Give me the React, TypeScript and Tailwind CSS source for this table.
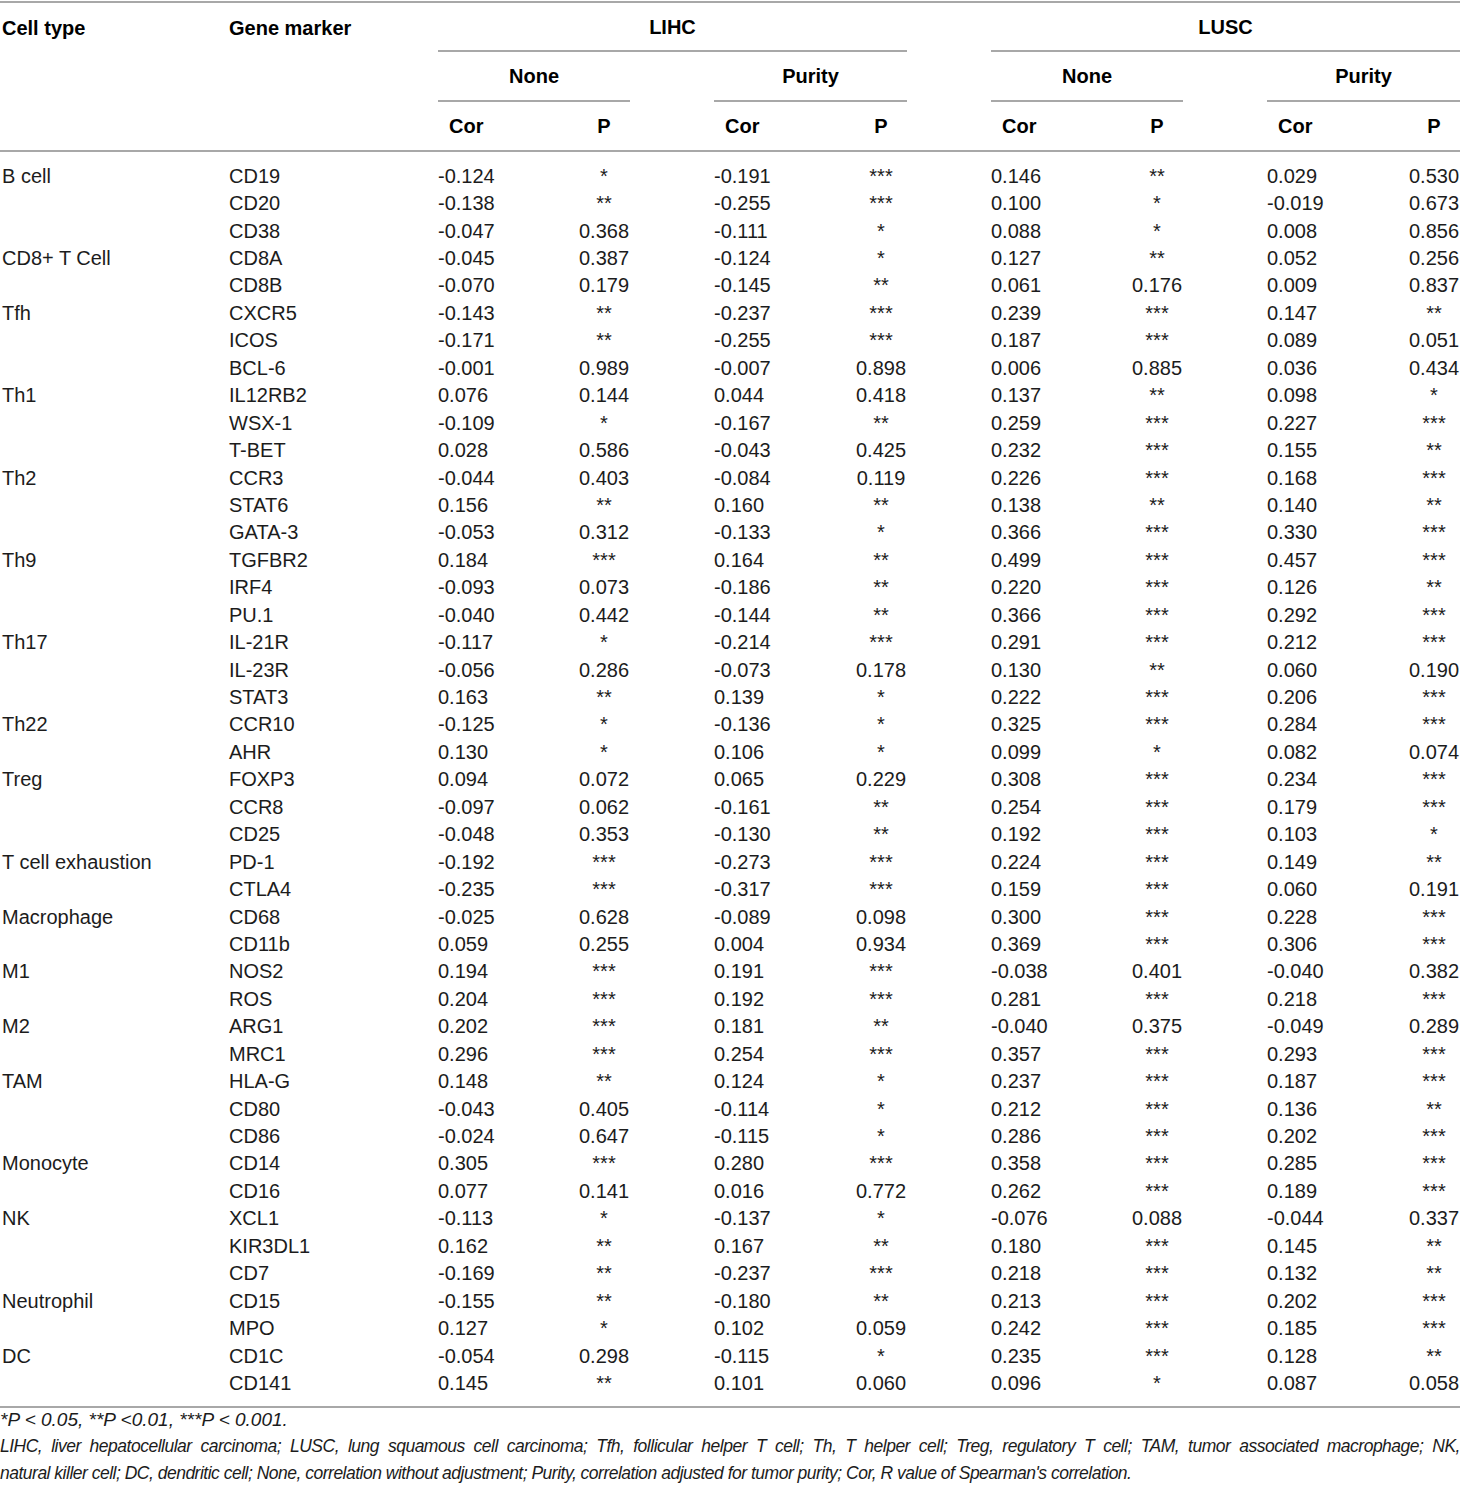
const rows: [string, string, string, string, string, string, string, string, string, string][] = [
  ["B cell", "CD19", "-0.124", "*", "-0.191", "***", "0.146", "**", "0.029", "0.530"],
  ["", "CD20", "-0.138", "**", "-0.255", "***", "0.100", "*", "-0.019", "0.673"],
  ["", "CD38", "-0.047", "0.368", "-0.111", "*", "0.088", "*", "0.008", "0.856"],
  ["CD8+ T Cell", "CD8A", "-0.045", "0.387", "-0.124", "*", "0.127", "**", "0.052", "0.256"],
  ["", "CD8B", "-0.070", "0.179", "-0.145", "**", "0.061", "0.176", "0.009", "0.837"],
  ["Tfh", "CXCR5", "-0.143", "**", "-0.237", "***", "0.239", "***", "0.147", "**"],
  ["", "ICOS", "-0.171", "**", "-0.255", "***", "0.187", "***", "0.089", "0.051"],
  ["", "BCL-6", "-0.001", "0.989", "-0.007", "0.898", "0.006", "0.885", "0.036", "0.434"],
  ["Th1", "IL12RB2", "0.076", "0.144", "0.044", "0.418", "0.137", "**", "0.098", "*"],
  ["", "WSX-1", "-0.109", "*", "-0.167", "**", "0.259", "***", "0.227", "***"],
  ["", "T-BET", "0.028", "0.586", "-0.043", "0.425", "0.232", "***", "0.155", "**"],
  ["Th2", "CCR3", "-0.044", "0.403", "-0.084", "0.119", "0.226", "***", "0.168", "***"],
  ["", "STAT6", "0.156", "**", "0.160", "**", "0.138", "**", "0.140", "**"],
  ["", "GATA-3", "-0.053", "0.312", "-0.133", "*", "0.366", "***", "0.330", "***"],
  ["Th9", "TGFBR2", "0.184", "***", "0.164", "**", "0.499", "***", "0.457", "***"],
  ["", "IRF4", "-0.093", "0.073", "-0.186", "**", "0.220", "***", "0.126", "**"],
  ["", "PU.1", "-0.040", "0.442", "-0.144", "**", "0.366", "***", "0.292", "***"],
  ["Th17", "IL-21R", "-0.117", "*", "-0.214", "***", "0.291", "***", "0.212", "***"],
  ["", "IL-23R", "-0.056", "0.286", "-0.073", "0.178", "0.130", "**", "0.060", "0.190"],
  ["", "STAT3", "0.163", "**", "0.139", "*", "0.222", "***", "0.206", "***"],
  ["Th22", "CCR10", "-0.125", "*", "-0.136", "*", "0.325", "***", "0.284", "***"],
  ["", "AHR", "0.130", "*", "0.106", "*", "0.099", "*", "0.082", "0.074"],
  ["Treg", "FOXP3", "0.094", "0.072", "0.065", "0.229", "0.308", "***", "0.234", "***"],
  ["", "CCR8", "-0.097", "0.062", "-0.161", "**", "0.254", "***", "0.179", "***"],
  ["", "CD25", "-0.048", "0.353", "-0.130", "**", "0.192", "***", "0.103", "*"],
  ["T cell exhaustion", "PD-1", "-0.192", "***", "-0.273", "***", "0.224", "***", "0.149", "**"],
  ["", "CTLA4", "-0.235", "***", "-0.317", "***", "0.159", "***", "0.060", "0.191"],
  ["Macrophage", "CD68", "-0.025", "0.628", "-0.089", "0.098", "0.300", "***", "0.228", "***"],
  ["", "CD11b", "0.059", "0.255", "0.004", "0.934", "0.369", "***", "0.306", "***"],
  ["M1", "NOS2", "0.194", "***", "0.191", "***", "-0.038", "0.401", "-0.040", "0.382"],
  ["", "ROS", "0.204", "***", "0.192", "***", "0.281", "***", "0.218", "***"],
  ["M2", "ARG1", "0.202", "***", "0.181", "**", "-0.040", "0.375", "-0.049", "0.289"],
  ["", "MRC1", "0.296", "***", "0.254", "***", "0.357", "***", "0.293", "***"],
  ["TAM", "HLA-G", "0.148", "**", "0.124", "*", "0.237", "***", "0.187", "***"],
  ["", "CD80", "-0.043", "0.405", "-0.114", "*", "0.212", "***", "0.136", "**"],
  ["", "CD86", "-0.024", "0.647", "-0.115", "*", "0.286", "***", "0.202", "***"],
  ["Monocyte", "CD14", "0.305", "***", "0.280", "***", "0.358", "***", "0.285", "***"],
  ["", "CD16", "0.077", "0.141", "0.016", "0.772", "0.262", "***", "0.189", "***"],
  ["NK", "XCL1", "-0.113", "*", "-0.137", "*", "-0.076", "0.088", "-0.044", "0.337"],
  ["", "KIR3DL1", "0.162", "**", "0.167", "**", "0.180", "***", "0.145", "**"],
  ["", "CD7", "-0.169", "**", "-0.237", "***", "0.218", "***", "0.132", "**"],
  ["Neutrophil", "CD15", "-0.155", "**", "-0.180", "**", "0.213", "***", "0.202", "***"],
  ["", "MPO", "0.127", "*", "0.102", "0.059", "0.242", "***", "0.185", "***"],
  ["DC", "CD1C", "-0.054", "0.298", "-0.115", "*", "0.235", "***", "0.128", "**"],
  ["", "CD141", "0.145", "**", "0.101", "0.060", "0.096", "*", "0.087", "0.058"],
];

// column widths read off the reference: label, marker, then (cor, p, gap) x4
const cols =
  "grid grid-cols-[229px_209px_140px_52px_84px_141px_52px_84px_140px_52px_84px_141px_52px]";

function PCell({ v }: { v: string }) {
  return <div className="text-center">{v}</div>;
}

export default function App() {
  return (
    <div className="w-[1460px] bg-white text-[20px] text-[#1c1c1c] font-['Liberation_Sans',Arial,sans-serif]">
      <div className="border-t-2 border-[#a8a8a8] mt-px">
        {/* header */}
        <div className={`${cols} h-[49px] items-center font-bold text-black`}>
          <div className="pl-[2px]">Cell type</div>
          <div>Gene marker</div>
          <div className="col-span-5 self-stretch flex items-center justify-center border-b-2 border-[#a8a8a8]">
            LIHC
          </div>
          <div />
          <div className="col-span-5 self-stretch flex items-center justify-center border-b-2 border-[#a8a8a8]">
            LUSC
          </div>
        </div>
        <div className={`${cols} h-[50px] font-bold text-black`}>
          <div />
          <div />
          <div className="col-span-2 flex items-center justify-center border-b-2 border-[#a8a8a8]">None</div>
          <div />
          <div className="col-span-2 flex items-center justify-center border-b-2 border-[#a8a8a8]">Purity</div>
          <div />
          <div className="col-span-2 flex items-center justify-center border-b-2 border-[#a8a8a8]">None</div>
          <div />
          <div className="col-span-2 flex items-center justify-center border-b-2 border-[#a8a8a8]">Purity</div>
        </div>
        <div className={`${cols} h-[50px] items-center font-bold text-black border-b-2 border-[#a8a8a8]`}>
          <div />
          <div />
          <div className="pl-[11px]">Cor</div>
          <div className="text-center">P</div>
          <div />
          <div className="pl-[11px]">Cor</div>
          <div className="text-center">P</div>
          <div />
          <div className="pl-[11px]">Cor</div>
          <div className="text-center">P</div>
          <div />
          <div className="pl-[11px]">Cor</div>
          <div className="text-center">P</div>
        </div>

        {/* body */}
        <div className="pt-[10px] pb-[9px] border-b-2 border-[#a8a8a8]">
          {rows.map((r, i) => (
            <div key={i} className={`${cols} h-[27.45px] items-center leading-none`}>
              <div className="pl-[2px]">{r[0]}</div>
              <div>{r[1]}</div>
              <div>{r[2]}</div>
              <PCell v={r[3]} />
              <div />
              <div>{r[4]}</div>
              <PCell v={r[5]} />
              <div />
              <div>{r[6]}</div>
              <PCell v={r[7]} />
              <div />
              <div>{r[8]}</div>
              <PCell v={r[9]} />
            </div>
          ))}
        </div>

        {/* notes */}
        <div className="italic leading-[27px] -mt-[2px] pb-[4px]">
          <p className="text-[19px]">*P &lt; 0.05, **P &lt;0.01, ***P &lt; 0.001.</p>
          <p className="text-[17.5px] tracking-[-0.5px] text-justify [text-align-last:justify]">
            LIHC, liver hepatocellular carcinoma; LUSC, lung squamous cell carcinoma; Tfh, follicular helper T cell; Th, T
            helper cell; Treg, regulatory T cell; TAM, tumor associated macrophage; NK,
          </p>
          <p className="text-[17.5px] tracking-[-0.5px]">
            natural killer cell; DC, dendritic cell; None, correlation without adjustment; Purity, correlation adjusted for
            tumor purity; Cor, R value of Spearman's correlation.
          </p>
        </div>
      </div>
    </div>
  );
}
